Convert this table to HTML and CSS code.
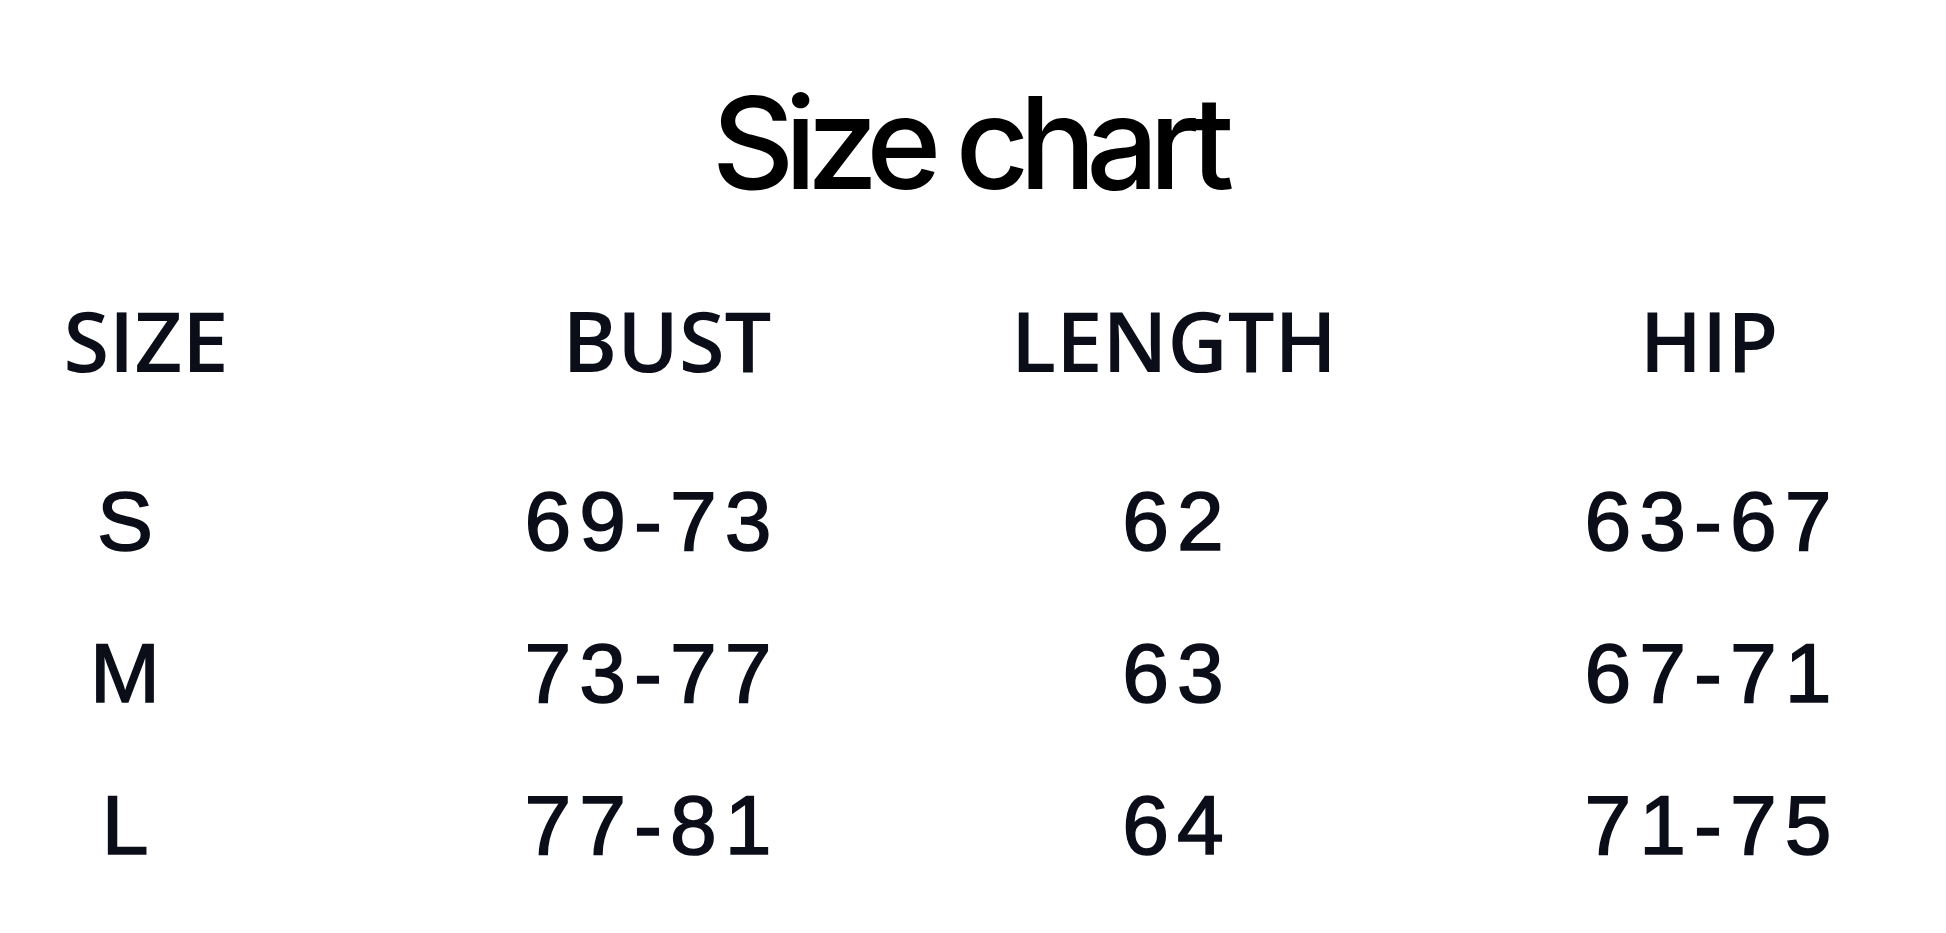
FILE: index.html
```html
<!DOCTYPE html>
<html lang="en">
<head>
<meta charset="utf-8">
<title>Size chart</title>
<link rel="stylesheet" href="styles.css">
</head>
<body>
<main class="page">
  <h1 class="title">Size chart</h1>
  <section class="chart">
    <div class="row head">
      <div class="cell">SIZE</div>
      <div class="cell">BUST</div>
      <div class="cell length">LENGTH</div>
      <div class="cell">HIP</div>
    </div>
    <div class="rows">
      <div class="row data">
        <div class="cell size">S</div>
        <div class="cell">69-73</div>
        <div class="cell length">62</div>
        <div class="cell">63-67</div>
      </div>
      <div class="row data">
        <div class="cell size">M</div>
        <div class="cell">73-77</div>
        <div class="cell length">63</div>
        <div class="cell">67-71</div>
      </div>
      <div class="row data">
        <div class="cell size">L</div>
        <div class="cell">77-81</div>
        <div class="cell length">64</div>
        <div class="cell">71-75</div>
      </div>
    </div>
  </section>
</main>
</body>
</html>
```

FILE: styles.css
```css
*, *::before, *::after {
  box-sizing: border-box;
}

html, body {
  margin: 0;
  padding: 0;
  background: #ffffff;
}

.page {
  width: 1946px;
  height: 933px;
  overflow: hidden;
  display: flex;
  flex-direction: column;
  align-items: stretch;
}

.title {
  margin: 79px 0 0 0;
  padding-right: 10px;
  text-align: center;
  font-family: Inter, "Liberation Sans", sans-serif;
  font-weight: 500;
  font-size: 128px;
  line-height: 1;
  letter-spacing: -10px;
  color: #000000;
}

.chart {
  margin-top: 91px;
  display: flex;
  flex-direction: column;
}

.row {
  display: flex;
  gap: 294px;
}

.cell {
  width: 236px;
  flex: 0 0 236px;
  display: flex;
  justify-content: center;
  white-space: nowrap;
}

.head {
  gap: 285px;
  padding-left: 28px;
  font-family: "Open Sans", "Liberation Sans", sans-serif;
  font-weight: 600;
  font-size: 83px;
  line-height: 1;
  color: #0b0d18;
  margin-bottom: 98px;
}

.head .length {
  padding-right: 28px;
}

.rows {
  display: flex;
  flex-direction: column;
  gap: 68px;
}

.data {
  font-family: "Liberation Sans", Arial, sans-serif;
  font-weight: 400;
  font-size: 84px;
  line-height: 1;
  letter-spacing: 8px;
  color: #0b0d18;
  -webkit-text-stroke: 1.6px #0b0d18;
}

.data .cell {
  padding-left: 8px;
}

.data .size {
  padding-left: 22px;
}

.data .length {
  padding-right: 10px;
}
```
